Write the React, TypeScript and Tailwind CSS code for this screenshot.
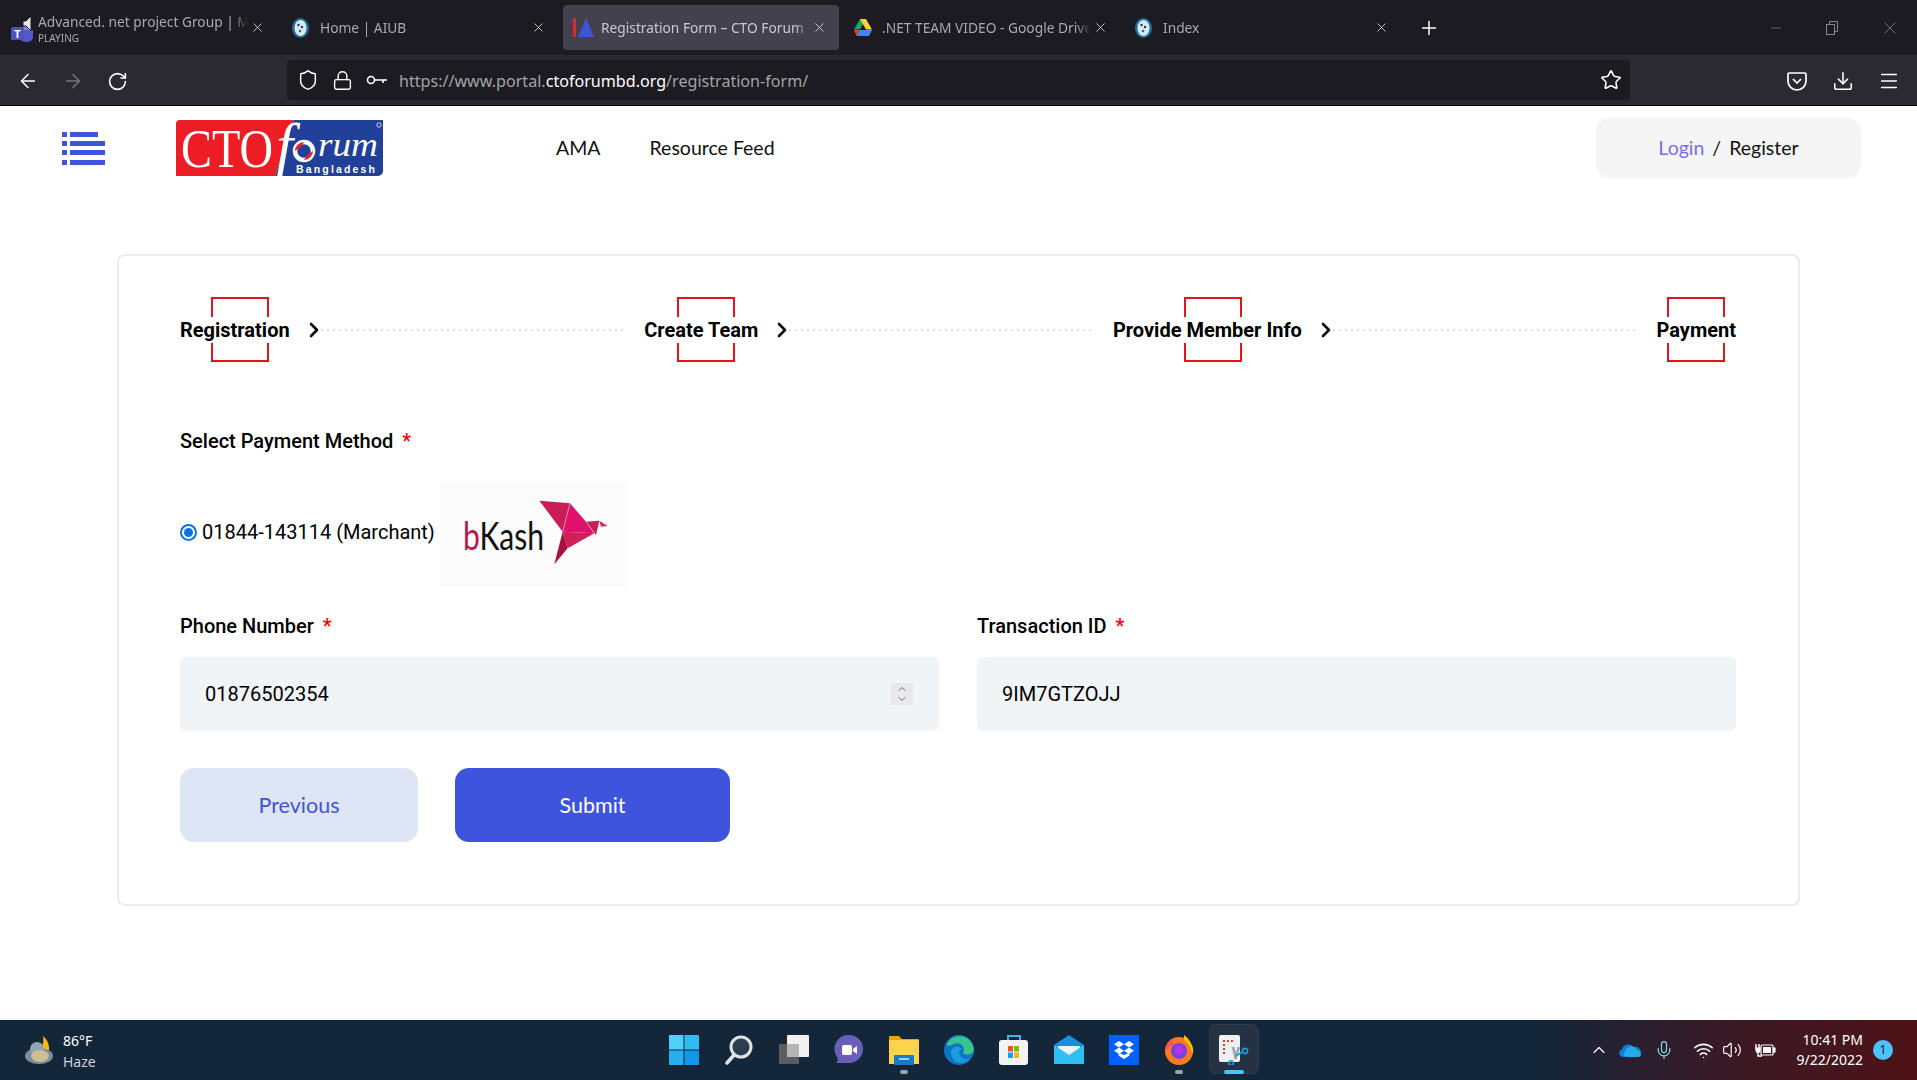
import React from "react";
import { ArrowLeft, ArrowRight, RotateCw, Shield, Lock, Star, Download, Menu, X, Plus, Minus, ChevronRight, ChevronUp, ChevronDown, Mic, Wifi, Volume2 } from "lucide-react";

const Globe = () => (
  <svg width="17" height="20" viewBox="0 0 17 20" className="shrink-0">
    <ellipse cx="8.5" cy="10" rx="8.5" ry="10" fill="#1f6f9c" />
    <ellipse cx="8.5" cy="10" rx="6" ry="8" fill="#dbe9f2" />
    <circle cx="6.5" cy="7" r="1.2" fill="#17384f" />
    <circle cx="10" cy="9" r="1.2" fill="#17384f" />
    <circle cx="8" cy="13" r="1.3" fill="#2c6c90" />
  </svg>
);

const Teams = () => (
  <svg width="24" height="30" viewBox="0 0 24 30" className="shrink-0">
    <circle cx="16" cy="15" r="4" fill="#7b83eb" />
    <path d="M9 17h13v7a5 5 0 0 1-5 5h-3a5 5 0 0 1-5-5z" fill="#5059c9" />
    <rect x="0" y="14" width="13" height="13" rx="1.5" fill="#4b53bc" />
    <text x="3" y="24.5" fontSize="11" fontWeight="700" fill="#fff" fontFamily="Roboto, sans-serif">T</text>
    <path d="M12 8h3l5-5v15l-5-5h-3z" fill="#e8e8e8" stroke="#1c1b22" strokeWidth="1" />
  </svg>
);

const CtoFavicon = () => (
  <svg width="21" height="19" viewBox="0 0 21 19" className="shrink-0">
    <rect x="0" y="0" width="3" height="19" fill="#e3262c" />
    <path d="M13 0l8 19H5z" fill="#3b55d6" />
  </svg>
);

const Drive = () => (
  <svg width="18" height="17" viewBox="0 0 18 17" className="shrink-0">
    <path d="M6 0h6l-6 10.5H0z" fill="#1fa463" />
    <path d="M6 0h6l6 10.5h-6z" fill="#ffcf3f" />
    <path d="M0 11h18l-3 6H3z" fill="#4285f4" />
    <path d="M0 11h6l-3 6z" fill="#d93f2a" />
  </svg>
);

function Tab({ icon, title, active, playing, iconBox }: { icon: React.ReactNode; title: string; active?: boolean; playing?: boolean; iconBox: string }) {
  return (
    <div className="w-[281px] h-[45px] pl-px pr-[4px] shrink-0">
      <div className={`h-full flex items-center pl-[10px] pr-[12px] rounded-[4px] ${active ? "bg-[#42414d]" : ""}`}>
        <div className={`${iconBox} shrink-0 flex`}>{icon}</div>
        <div className="flex-1 min-w-0 pt-px overflow-hidden [mask-image:linear-gradient(to_right,black_93%,transparent)]">
          <div className={`whitespace-nowrap text-[13.75px] leading-[18px] ${active ? "text-[#c9c9cf]" : "text-[#a9a9ae]"}`}>{title}</div>
          {playing && <div className="text-[10px] leading-[12px] mt-px text-[#a9a9ae]">PLAYING</div>}
        </div>
        <X size={15} strokeWidth={1.4} className="ml-[2px] text-[#d5d5d8] shrink-0" />
      </div>
    </div>
  );
}

const Logo = () => (
  <svg width="208" height="56" viewBox="0 0 208 56" className="shrink-0">
    <path d="M4 0H118C108 14 106 40 99 56H0V4a4 4 0 0 1 4-4z" fill="#ee1c25" />
    <path d="M118 0H207V51a5 5 0 0 1-5 5H99C106 40 108 14 118 0z" fill="#21409a" />
    <text x="5" y="47" fontFamily="'Liberation Serif', serif" fontSize="54" fill="#fff" textLength="92" lengthAdjust="spacingAndGlyphs">CTO</text>
    <text x="100" y="46" fontFamily="'Liberation Serif', serif" fontStyle="italic" fontSize="62" fill="#fff">f</text>
    <circle cx="128" cy="31" r="9" fill="none" stroke="#fff" strokeWidth="4.5" />
    <path d="M119 31a9 9 0 0 1 9-9l-3 5zM137 31a9 9 0 0 1-9 9l3-5z" fill="#ee1c25" />
    <text x="142" y="36" fontFamily="'Liberation Serif', serif" fontStyle="italic" fontSize="33" fill="#fff" textLength="60" lengthAdjust="spacingAndGlyphs">rum</text>
    <text x="120" y="53" fontFamily="'Liberation Sans', sans-serif" fontWeight="700" fontSize="10.5" fill="#fff" textLength="79">Bangladesh</text>
    <circle cx="203" cy="5" r="2.2" fill="none" stroke="#fff" strokeWidth=".7" />
  </svg>
);

const BKash = () => (
  <svg width="188" height="104" viewBox="0 0 188 104" className="shrink-0">
    <text x="23" y="68" fontFamily="Lato, sans-serif" fontSize="38" textLength="81" lengthAdjust="spacingAndGlyphs">
      <tspan fill="#b5174f">b</tspan>
      <tspan fill="#111">Kash</tspan>
    </text>
    <g transform="translate(-9 -12) scale(.3333)">
      <polygon points="325,92 417,100 395,185" fill="#c81d55" />
      <polygon points="417,100 465,155 490,190 395,185" fill="#e0116b" />
      <polygon points="395,185 490,190 410,235" fill="#d01f5b" />
      <polygon points="395,185 410,235 370,283" fill="#a5123f" />
      <polygon points="465,155 505,152 495,195" fill="#c51d56" />
      <polygon points="505,152 530,168 510,170" fill="#d42a63" />
      <path d="M417 100L395 185M465 155L490 190" stroke="#f3a9c4" strokeWidth="2" fill="none" />
    </g>
  </svg>
);

const steps = [
  { label: "Registration", bracket: "left-[31px]", chevron: true },
  { label: "Create Team", bracket: "left-[33px]", chevron: true },
  { label: "Provide Member Info", bracket: "left-[71px]", chevron: true },
  { label: "Payment", bracket: "left-[10px]", chevron: false },
];

function Step({ label, bracket, chevron }: { label: string; bracket: string; chevron: boolean }) {
  return (
    <div className="relative flex items-center h-[65px] shrink-0">
      <div className={`absolute top-0 ${bracket} w-[58px] h-[65px] border-2 border-[#e3141c]`} />
      <span className="relative z-10 bg-white font-bold text-[20px] leading-[25px] pt-px text-black">{label}</span>
      {chevron && <ChevronRight size={24} strokeWidth={2.6} className="ml-[12px] text-black shrink-0" />}
    </div>
  );
}

const Req = ({ children }: { children: React.ReactNode }) => (
  <div className="h-6 flex items-center text-[20px] font-medium leading-6 text-black">
    {children}
    <span className="ml-[9px] text-[#ff0000]">*</span>
  </div>
);

const TaskIcon = ({ children, dot }: { children: React.ReactNode; dot?: "gray" | "blue" }) => (
  <div className="relative w-[30px] h-[30px]">
    {children}
    {dot === "gray" && <div className="absolute left-[11px] top-[35px] w-[8px] h-[4px] rounded-full bg-[#9aa3ad]" />}
    {dot === "blue" && <div className="absolute left-[5px] top-[35px] w-[20px] h-[4px] rounded-full bg-[#4cc2ff]" />}
  </div>
);

const s = { width: 30, height: 30, viewBox: "0 0 30 30" };

export default function App() {
  return (
    <div className="h-screen w-full flex flex-col overflow-hidden bg-white font-['Roboto',sans-serif]">
      {/* tab strip */}
      <div className="h-[55px] shrink-0 bg-[#1c1b22] pt-[5px] flex items-start font-['Noto_Sans',sans-serif]">
        <Tab iconBox="w-[27px]" icon={<Teams />} title="Advanced. net project Group | Microsoft Teams" playing />
        <Tab iconBox="w-[28px]" icon={<Globe />} title="Home | AIUB" />
        <Tab iconBox="w-[28px]" icon={<CtoFavicon />} title="Registration Form – CTO Forum" active />
        <Tab iconBox="w-[28px]" icon={<Drive />} title=".NET TEAM VIDEO - Google Drive" />
        <Tab iconBox="w-[28px]" icon={<Globe />} title="Index" />
        <Plus size={22} strokeWidth={1.6} className="text-white mt-[12px] ml-[13px]" />
        <div className="ml-auto flex items-center h-[45px] pr-[17px] gap-[40px] text-[#85858a]">
          <Minus size={16} strokeWidth={1} />
          <svg width="16" height="16" viewBox="0 0 16 16" fill="none" stroke="currentColor"><rect x="2.5" y="4.5" width="8" height="10" /><path d="M5.5 4.5v-3h8v10h-3" /></svg>
          <X size={20} strokeWidth={1} />
        </div>
      </div>
      {/* toolbar */}
      <div className="h-[51px] shrink-0 bg-[#2b2a33] border-b border-black flex items-center text-white">
        <div className="w-[287px] shrink-0 flex items-center pl-[17px] gap-[23px] mt-[2px]">
          <ArrowLeft size={22} strokeWidth={1.6} />
          <ArrowRight size={22} strokeWidth={1.6} className="text-[#77767c]" />
          <RotateCw size={21} strokeWidth={1.8} />
        </div>
        <div className="w-[1343px] h-[40px] rounded-[4px] bg-[#1c1b22] flex items-center pl-[10px] pr-[8px]">
          <Shield size={22} strokeWidth={1.6} />
          <Lock size={21} strokeWidth={1.6} className="ml-[13px]" />
          <svg width="22" height="12" viewBox="0 0 22 12" fill="none" stroke="white" strokeWidth="1.6" className="ml-[13px]"><circle cx="5" cy="6" r="3.5" /><path d="M9 6h12M17 6v3" /></svg>
          <div className="ml-[11px] mt-[3px] text-[16.1px] font-['Noto_Sans',sans-serif] text-[#a3a3a8] whitespace-nowrap">
            https://www.portal.<span className="text-white">ctoforumbd.org</span>/registration-form/
          </div>
          <Star size={22} strokeWidth={1.7} className="ml-auto" />
        </div>
        <div className="ml-[156px] flex items-center gap-[24px] mt-[2px]">
          <svg width="22" height="22" viewBox="0 0 22 22" fill="none" stroke="white" strokeWidth="1.7"><path d="M3 3h16a1 1 0 0 1 1 1v7a9 9 0 0 1-18 0V4a1 1 0 0 1 1-1z" /><path d="M7 9l4 4 4-4" /></svg>
          <Download size={22} strokeWidth={1.7} />
          <Menu size={22} strokeWidth={1.7} />
        </div>
      </div>
      {/* page */}
      <div className="flex-1 min-h-0">
        <header className="h-[84px] flex items-center pl-[62px] pr-[56px]">
          <svg width="43" height="33" viewBox="0 0 43 33" fill="#3e54dc" className="shrink-0">
            <rect x="0" y="0" width="5" height="5" /><rect x="8" y="0" width="28" height="5" />
            <rect x="0" y="9" width="5" height="5" /><rect x="8" y="9" width="35" height="5" />
            <rect x="0" y="18" width="5" height="5" /><rect x="8" y="18" width="35" height="5" />
            <rect x="0" y="28" width="5" height="5" /><rect x="8" y="28" width="35" height="5" />
          </svg>
          <div className="ml-[71px]"><Logo /></div>
          <nav className="ml-[172px] flex gap-[49px] font-['Lato',sans-serif] text-[19.5px] text-[#111]">
            <span>AMA</span>
            <span>Resource Feed</span>
          </nav>
          <div className="ml-auto w-[265px] h-[60px] rounded-[14px] bg-[#f5f5f5] flex items-center justify-center font-['Lato',sans-serif] text-[19.5px] text-[#111]">
            <span className="text-[#7a6cf5]">Login</span>
            <span className="mx-[8px]">/</span>
            <span>Register</span>
          </div>
        </header>
        <main className="mx-[117px] mt-[64px] border-2 border-[#ebebeb] rounded-[8px] pt-[41px] pb-[62px] pl-[61px] pr-[62px]">
          <div className="flex items-center">
            {steps.map((st, i) => (
              <React.Fragment key={st.label}>
                <Step {...st} />
                {i < steps.length - 1 && <div className="flex-1 -ml-[5px] mr-[20px] h-[2px] bg-[repeating-linear-gradient(90deg,#e0e0e0_0_2px,transparent_2px_6px)]" />}
              </React.Fragment>
            ))}
          </div>
          <div className="mt-[67px]"><Req>Select Payment Method</Req></div>
          <div className="mt-[29px] flex items-center">
            <div className="flex items-center mb-[4px]">
              <div className="w-[17px] h-[17px] rounded-full border-2 border-[#0f6fe0] flex items-center justify-center shrink-0">
                <div className="w-[9px] h-[9px] rounded-full bg-[#0f6fe0]" />
              </div>
              <span className="ml-[5px] text-[20px] text-black whitespace-nowrap w-[238px]">01844-143114 (Marchant)</span>
            </div>
            <div className="bg-[#fbfbfb]"><BKash /></div>
          </div>
          <div className="mt-[28px] grid grid-cols-2 gap-x-[38px]">
            <div>
              <Req>Phone Number</Req>
              <div className="relative mt-[19px] h-[74px] rounded-[6px] bg-[#f0f4f7] flex items-center pl-[25px] text-[20px] text-black">
                01876502354
                <div className="absolute right-[26px] top-[26px] w-[22px] h-[22px] bg-[#e9e9ed] flex flex-col items-center justify-center text-[#6b6b70]">
                  <ChevronUp size={12} strokeWidth={2} className="-mb-px" />
                  <ChevronDown size={12} strokeWidth={2} className="-mt-px" />
                </div>
              </div>
            </div>
            <div>
              <Req>Transaction ID</Req>
              <div className="mt-[19px] h-[74px] rounded-[6px] bg-[#f0f4f7] flex items-center pl-[25px] text-[20px] text-black">9IM7GTZOJJ</div>
            </div>
          </div>
          <div className="mt-[37px] flex gap-[37px] font-['Lato',sans-serif] text-[21.5px]">
            <div className="w-[238px] h-[74px] rounded-[14px] bg-[#dee6f5] text-[#3e54dc] flex items-center justify-center">Previous</div>
            <div className="w-[275px] h-[74px] rounded-[14px] bg-[#3e54dc] text-white flex items-center justify-center">Submit</div>
          </div>
        </main>
      </div>
      {/* taskbar */}
      <div className="h-[60px] shrink-0 grid grid-cols-[1fr_auto_1fr] items-center bg-[linear-gradient(90deg,#14263a_0%,#14263a_80%,#3a1a26_90%,#4e1217_100%)] text-white font-['Noto_Sans',sans-serif]">
        <div className="flex items-center pl-[24px]">
          <svg width="30" height="28" viewBox="0 0 30 28" className="shrink-0">
            <path d="M19 0c6 5 8 13 4 19l-6-6c2-4 3-8 2-13z" fill="#f6b90e" />
            <ellipse cx="15" cy="20" rx="14" ry="8" fill="#7d8d9c" />
            <circle cx="13" cy="13" r="7" fill="#93a4b3" />
            <ellipse cx="16" cy="20" rx="9" ry="6" fill="#cbbf96" />
          </svg>
          <div className="ml-[9px] pt-[1px] text-[14px] leading-[21px]">
            <div>86°F</div>
            <div className="text-[#cdd2d8]">Haze</div>
          </div>
        </div>
        <div className="flex gap-[25px] items-center">
          <TaskIcon>
            <svg {...s}>
              <rect x="0" y="0" width="14.5" height="14.5" fill="#4fd0fb" /><rect x="15.5" y="0" width="14.5" height="14.5" fill="#2ebcf5" />
              <rect x="0" y="15.5" width="14.5" height="14.5" fill="#26aef0" /><rect x="15.5" y="15.5" width="14.5" height="14.5" fill="#1295ea" />
            </svg>
          </TaskIcon>
          <TaskIcon>
            <svg {...s} fill="none"><circle cx="17" cy="12" r="10" stroke="#dfe3e6" strokeWidth="3" fill="#2b3d4e" /><path d="M10 20L3 28" stroke="#dfe3e6" strokeWidth="3.5" strokeLinecap="round" /></svg>
          </TaskIcon>
          <TaskIcon>
            <svg {...s}><rect x="0" y="9" width="20" height="20" rx="1" fill="#5d5d5f" /><rect x="8" y="0" width="22" height="22" rx="1" fill="#f1f1f1" /><rect x="8" y="9" width="12" height="13" fill="#b5b5b5" /></svg>
          </TaskIcon>
          <TaskIcon>
            <svg {...s}><path d="M15 0a14 14 0 0 1 0 28H2c2-2 2-4 1-6A14 14 0 0 1 15 0z" fill="#6a5fb8" /><rect x="8" y="10" width="10" height="10" rx="2" fill="#fff" /><path d="M19 14l4-3v8l-4-3z" fill="#fff" /></svg>
          </TaskIcon>
          <TaskIcon dot="gray">
            <svg {...s}><path d="M0 2a1 1 0 0 1 1-1h9l3 3h16a1 1 0 0 1 1 1v24H0z" fill="#e9a10c" /><rect x="0" y="5" width="30" height="24" fill="#fdd24e" /><rect x="5" y="20" width="20" height="10" rx="1" fill="#1a78c8" /><rect x="10" y="23" width="10" height="2" fill="#9bd2f5" /></svg>
          </TaskIcon>
          <TaskIcon>
            <svg {...s}><circle cx="15" cy="15" r="15" fill="#0f74c8" /><path d="M3 9C8-2 27-2 30 14c0 6-8 7-11 4 3-6-3-12-9-9-4 2-6 3-7 0z" fill="#36c48f" /><path d="M7 16c2-5 8-6 11-2-4 1-4 6 0 9 3 2 6 1 8 0-4 6-13 7-17 1-2-3-2-6-2-8z" fill="#1b9de2" /></svg>
          </TaskIcon>
          <TaskIcon>
            <svg {...s}><path d="M9 6V1h12v5" fill="none" stroke="#35b7ef" strokeWidth="2" /><rect x="0" y="5" width="29" height="25" rx="3" fill="#f3f3f3" /><rect x="9" y="11" width="5" height="5.5" fill="#f25022" /><rect x="15" y="11" width="5" height="5.5" fill="#7fba00" /><rect x="9" y="17.5" width="5" height="5.5" fill="#00a4ef" /><rect x="15" y="17.5" width="5" height="5.5" fill="#ffb900" /></svg>
          </TaskIcon>
          <TaskIcon>
            <svg {...s}><path d="M0 10L15 0l15 10v19H0z" fill="#1a8fd8" /><path d="M4 11h22v8L15 25 4 19z" fill="#e9f5fc" /><path d="M0 10l15 10 15-10v19H0z" fill="#2fc0f2" /></svg>
          </TaskIcon>
          <TaskIcon>
            <svg {...s}><rect x="0" y="0" width="30" height="30" fill="#0061fe" /><path d="M10 6l5 3.2-5 3.2-5-3.2zM20 6l5 3.2-5 3.2-5-3.2zM10 12.6l5 3.2-5 3.2-5-3.2zM20 12.6l5 3.2-5 3.2-5-3.2zM15 20l5-2 .5 2.5-5.5 3.5-5.5-3.5.5-2.5z" fill="#fff" /></svg>
          </TaskIcon>
          <TaskIcon dot="gray">
            <svg {...s}><circle cx="15" cy="16" r="14" fill="#ff7a1f" /><path d="M20 0c7 5 10 13 9 19-2-6-5-11-9-14z" fill="#ffc107" /><path d="M1 16C2 9 6 5 9 4c-1 3 0 5 2 6-5 1-7 3-10 6z" fill="#ff4f5e" /><circle cx="15" cy="16" r="8" fill="#7542e5" /><circle cx="15" cy="15" r="4.5" fill="#b833e1" /></svg>
          </TaskIcon>
          <TaskIcon dot="blue">
            <div className="absolute -left-[10px] -top-[11px] w-[50px] h-[50px] rounded-[6px] bg-[#243244] border border-[#2d3b4c]" />
            <svg {...s} className="relative">
              <rect x="0" y="0" width="21" height="27" rx="2" fill="#eef0f2" />
              <path d="M4 5h2v2H4zM8 5h2v2H8zM12 5h2v2h-2zM4 9h2v2H4zM4 13h2v2H4zM4 17h2v2H4z" fill="#d7432f" />
              <path d="M14 12l3 12M20 12l-4 12" stroke="#9aa3a9" strokeWidth="2.5" />
              <circle cx="12" cy="28" r="2.3" fill="none" stroke="#1f9be0" strokeWidth="1.6" />
              <circle cx="26" cy="16" r="2.6" fill="none" stroke="#1f9be0" strokeWidth="1.6" />
              <path d="M23.5 17L17 21" stroke="#1f9be0" strokeWidth="1.6" />
            </svg>
          </TaskIcon>
        </div>
        <div className="flex items-center justify-end pr-[24px]">
          <ChevronUp size={20} strokeWidth={1.4} />
          <svg width="22" height="14" viewBox="0 0 22 14" className="ml-[10px]"><path d="M4 14a4 4 0 0 1-1-7.8A7 7 0 0 1 15 4a5 5 0 0 1 3 10z" fill="#0f7ed8" /><path d="M8 5a6 6 0 0 1 7-1 5 5 0 0 1 3 3c2 0 4 2 4 4s-1 3-3 3H8L4 12z" fill="#28a8ea" /></svg>
          <Mic size={20} strokeWidth={1.5} className="ml-[13px] text-[#7fd3e6]" />
          <Wifi size={21} strokeWidth={1.8} className="ml-[19px]" />
          <Volume2 size={20} strokeWidth={1.4} className="ml-[8px]" />
          <svg width="21" height="16" viewBox="0 0 21 16" className="ml-[13px]" fill="none" stroke="white" strokeWidth="1.2"><rect x="6" y="3" width="12" height="10" rx="1" /><rect x="8" y="5" width="8" height="6" fill="white" stroke="none" /><path d="M18 6h2v4h-2" fill="white" /><path d="M1 2v4M4 2v4" strokeWidth="1.4" /><path d="M0 5.5h5.5v3a2.5 2.5 0 0 1-5 0z" fill="white" stroke="none" /><path d="M3 11v3h4" strokeWidth="1.4" /></svg>
          <div className="ml-[21px] text-[14px] leading-[20px] text-right">
            <div>10:41 PM</div>
            <div>9/22/2022</div>
          </div>
          <div className="ml-[10px] w-[20px] h-[20px] rounded-full bg-[#4cc2ff] text-[#10212e] text-[12px] flex items-center justify-center">1</div>
        </div>
      </div>
    </div>
  );
}
